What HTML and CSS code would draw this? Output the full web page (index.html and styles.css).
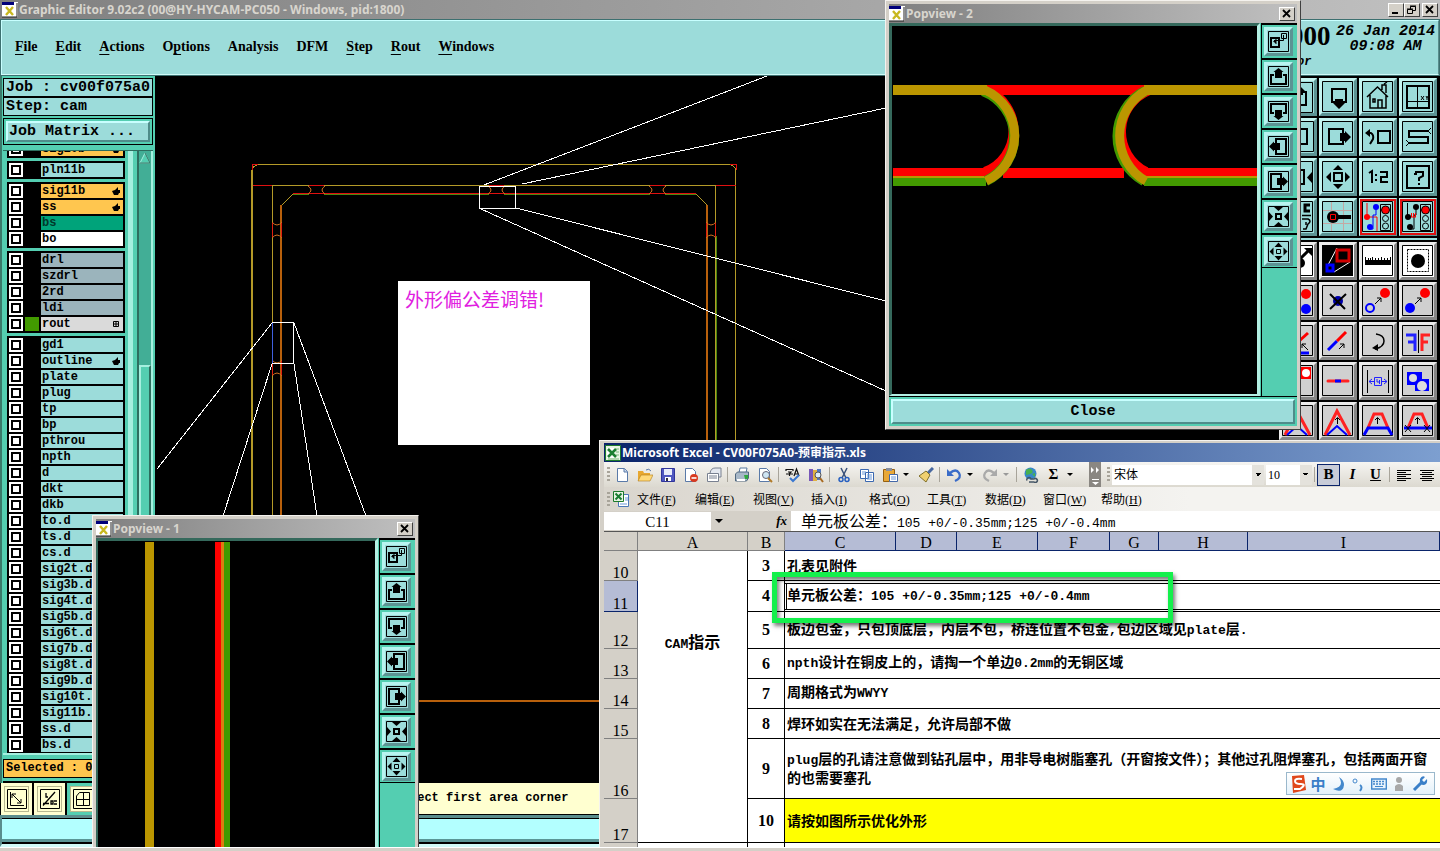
FILE: index.html
```html
<!DOCTYPE html>
<html lang="zh-CN">
<head>
<meta charset="utf-8">
<title>Graphic Editor</title>
<link rel="stylesheet" href="styles.css">
</head>
<body>
<svg class="defs" aria-hidden="true">
  <symbol id="app" viewBox="0 0 16 16"><path fill="#fff" d="M0 0h16v15H0z"/><path fill="#00007a" d="M0 0h12v3H0z"/><path d="M15 1v14H0" fill="none" stroke="#222"/><path d="M4 5l7 8M11 5l-7 8" stroke="#c8b820" stroke-width="2.4"/></symbol>
  <symbol id="x" viewBox="0 0 12 10"><path d="M2 1l7 7M9 1L2 8" stroke="#000" stroke-width="1.8"/></symbol>
  <symbol id="hand" viewBox="0 0 8 8"><path d="M0 4l3-1 3-3v3h2v3H7l-1 2H2z"/></symbol>
  <!-- view buttons, small -->
  <symbol id="v-link" viewBox="0 0 21 21"><path d="M.5.5h20v20H.5z" fill="none" stroke="#000"/><path d="M3 7h8v9H3z" fill="none" stroke="#000" stroke-width="2"/><path d="M13.500 2.500h5v5h-5zM15.500 4v5.500H6M8 8v5" fill="none" stroke="#000"/><path d="M5 10.500l3-2v4z"/></symbol>
  <symbol id="v-up" viewBox="0 0 21 21"><path d="M.5.5h20v20H.5z" fill="none" stroke="#000"/><path d="M6 9H3v9h15V9h-3" fill="none" stroke="#000" stroke-width="2"/><path d="M10.500 2l5 4H14v6H7V6H5.500z"/></symbol>
  <symbol id="v-left" viewBox="0 0 21 21"><path d="M.5.5h20v20H.5z" fill="none" stroke="#000"/><path d="M8 7V3h10v15H8v-4" fill="none" stroke="#000" stroke-width="2"/><path d="M1 10.500l5-5V7h6v7H6v1.500z"/></symbol>
  <symbol id="v-in" viewBox="0 0 21 21"><path d="M.5.5h20v20H.5z" fill="none" stroke="#000"/><path d="M8 8h5v5H8z" fill="none" stroke="#000" stroke-width="2"/><path d="M6 1h9l-4.500 4zM6 20h9l-4.500-4zM1 6v9l4-4.500zM20 6v9l-4-4.500z"/></symbol>
  <symbol id="v-out" viewBox="0 0 21 21"><path d="M.5.5h20v20H.5z" fill="none" stroke="#000"/><path d="M8.500 8.500h4v4h-4z" fill="none" stroke="#000"/><path d="M6.500 6L10.500 1.500 14.500 6zM6.500 15l4 4.500 4-4.500zM5.500 6.500v8L1.500 10.500zM15.500 6.500v8l4-4z"/></symbol>
  <!-- toolbox -->
  <symbol id="t-down" viewBox="0 0 32 32"><path d="M.5.5h30v30H.5z" fill="none" stroke="#000"/><path d="M13 21h-3V8h14v13h-3" fill="none" stroke="#000" stroke-width="2"/><path d="M13 18h8v4h2l-6 6-6-6h2z"/></symbol>
  <symbol id="t-right" viewBox="0 0 32 32"><path d="M.5.5h30v30H.5z" fill="none" stroke="#000"/><path d="M21 13V8H7v15h14v-4" fill="none" stroke="#000" stroke-width="2"/><path d="M18 12h5v-2l6 6-6 6v-2h-5z"/></symbol>
  <symbol id="t-house" viewBox="0 0 32 32"><path d="M.5.5h30v30H.5z" fill="none" stroke="#000"/><path d="M5 16L15.500 6 26 16M8 14v13h16V14M20 9V4h4v8M16 27v-8h4v8M11 18h2v3h-2zM22 3l3-2" fill="none" stroke="#000" stroke-width="1.500"/></symbol>
  <symbol id="t-xy" viewBox="0 0 32 32"><path d="M.5.5h30v30H.5z" fill="none" stroke="#000"/><path d="M5 5h22v22H5z" fill="none" stroke="#000" stroke-width="2"/><path d="M15.500 5v22M5 20.500h22M19 15l3 4M22 15l-3 4M24 15l1 2 1-2M25 17v2" fill="none" stroke="#000"/></symbol>
  <symbol id="t-back" viewBox="0 0 32 32"><path d="M.5.5h30v30H.5z" fill="none" stroke="#000"/><path d="M16 10h12v12H16zM5 12h4q3 2 2 6l-3 5" fill="none" stroke="#000" stroke-width="2"/><path d="M3 12l5-4v8z"/></symbol>
  <symbol id="t-s" viewBox="0 0 32 32"><path d="M.5.5h30v30H.5z" fill="none" stroke="#000"/><path d="M26 10H7v6h19v6H7" fill="none" stroke="#000" stroke-width="2"/><path d="M26 10l3-3M26 10l3 3M7 22l-3-3M7 22l-3 3" stroke="#000"/></symbol>
  <symbol id="t-in" viewBox="0 0 32 32"><path d="M.5.5h30v30H.5z" fill="none" stroke="#000"/><path d="M8 9h14v14H8z" fill="none" stroke="#000" stroke-width="2"/><path d="M30 11v11l-5-5.500z"/></symbol>
  <symbol id="t-out" viewBox="0 0 32 32"><path d="M.5.5h30v30H.5z" fill="none" stroke="#000"/><path d="M12 12h8v8h-8z" fill="none" stroke="#000" stroke-width="2"/><path d="M11 9l5-5 5 5zM11 23l5 5 5-5zM9 11v10l-5-5zM23 11v10l5-5z"/></symbol>
  <symbol id="t-12" viewBox="0 0 32 32"><path d="M.5.5h30v30H.5z" fill="none" stroke="#000"/><path d="M7 12l3-2v12M14 13v2M14 18v2M18 11h7v5h-6v5h7" fill="none" stroke="#000" stroke-width="2"/></symbol>
  <symbol id="t-q" viewBox="0 0 32 32"><path d="M.5.5h30v30H.5z" fill="none" stroke="#000"/><path d="M5 5h22v22H5zM12 13h2v-2h7v4l-4 2v3M17 22v2" fill="none" stroke="#000" stroke-width="2"/></symbol>
  <symbol id="t-c" viewBox="0 0 32 32"><path d="M.5.5h30v30H.5z" fill="none" stroke="#000"/><path d="M28 4h-5v6h5" fill="none" stroke="#000" stroke-width="3"/><path d="M20 14.500h9M20 18h6q4 2 0 5l-2 5h-3M24 21v3" fill="none" stroke="#000" stroke-width="1.500"/></symbol>
  <symbol id="t-pad" viewBox="0 0 32 32"><path d="M.5.5h30v30H.5z" fill="none" stroke="#000"/><path d="M9.500 1v29M21.500 1v29M1 9.500h29M1 22.500h29" stroke="#c4a8a4"/><circle cx="11" cy="16" r="6"/><path d="M15 16h14" stroke="#000" stroke-width="4"/><path d="M8.500 13.500h5v5h-5z" fill="none" stroke="#f00"/></symbol>
  <symbol id="t-net1" viewBox="0 0 32 32"><path d="M.5.5h30v30H.5z" fill="none" stroke="#000"/><path d="M5 2v14h10v14" fill="none" stroke="#f00"/><path d="M14 6v8h-3v14H7" fill="none" stroke="#00f"/><circle cx="14" cy="6" r="3" fill="#00f"/><circle cx="8" cy="26" r="3" fill="#00f"/><circle cx="5" cy="16" r="3" fill="#f00"/><path d="M18.500 3.500h10v26h-10z" fill="none" stroke="#000"/><circle cx="23.500" cy="9" r="4" fill="#f00" stroke="#000"/><circle cx="23.500" cy="17.500" r="3" fill="none" stroke="#000"/><circle cx="23.500" cy="25" r="3" fill="none" stroke="#000"/></symbol>
  <symbol id="t-net2" viewBox="0 0 32 32"><path d="M.5.5h30v30H.5z" fill="none" stroke="#000"/><path d="M5.500 2v14M14 6v8h-2v14H8" fill="none" stroke="#000"/><circle cx="14" cy="6" r="3"/><circle cx="8" cy="26" r="3"/><circle cx="6" cy="16" r="3"/><path d="M9 16h5M9.500 12v4M11.500 12v4M13.500 12v4" stroke="#f00"/><path d="M18.500 3.500h10v26h-10z" fill="none" stroke="#000"/><circle cx="23.500" cy="9" r="4" fill="#f00" stroke="#000"/><circle cx="23.500" cy="17.500" r="3" fill="none" stroke="#000"/><circle cx="23.500" cy="25" r="3" fill="none" stroke="#000"/></symbol>
  <symbol id="g-move" viewBox="0 0 32 32"><path d="M.5.5h30v30H.5z" fill="none" stroke="#000"/><path d="M18 14l9-9" stroke="#000" stroke-width="3"/><path d="M22 3h8v8z"/><circle cx="18" cy="18" r="5"/></symbol>
  <symbol id="g-zoom" viewBox="0 0 32 32"><path d="M0 0h31v31H0z"/><path d="M6 20L15 3M12 27l16-10" stroke="#fff"/><path d="M15 5h12v11H15z" fill="none" stroke="#d00000" stroke-width="3"/><path d="M5 20h6v6H5z" fill="none" stroke="#00f" stroke-width="3"/></symbol>
  <symbol id="g-rule" viewBox="0 0 32 32"><path d="M.5.5h30v30H.5z" fill="none" stroke="#000"/><path d="M3 12v8h26v-8h-1v3h-2v-2h-1v2h-2v-2h-1v2h-2v-3h-1v3h-2v-2h-1v2h-2v-2h-1v2h-2v-3h-1v3h-2v-2H9v2H7v-2H6v2H4v-3z"/></symbol>
  <symbol id="g-dot" viewBox="0 0 32 32"><path d="M.5.5h30v30H.5z" fill="none" stroke="#000"/><path d="M5.500 4.500h21v22h-21z" fill="none" stroke="#000" stroke-dasharray="2 1"/><circle cx="16" cy="16" r="7"/></symbol>
  <symbol id="g-two" viewBox="0 0 32 32"><path d="M.5.5h30v30H.5z" fill="none" stroke="#000"/><circle cx="24" cy="9" r="5" fill="#f00"/><circle cx="24" cy="24" r="5" fill="#00f"/></symbol>
  <symbol id="g-del" viewBox="0 0 32 32"><path d="M.5.5h30v30H.5z" fill="none" stroke="#000"/><circle cx="16" cy="16" r="5" fill="#00a"/><path d="M8 9l15 15M24 9L8 24" stroke="#000" stroke-width="2"/></symbol>
  <symbol id="g-cp" viewBox="0 0 32 32"><path d="M.5.5h30v30H.5z" fill="none" stroke="#000"/><circle cx="8" cy="23" r="4" fill="none" stroke="#00f" stroke-width="2"/><circle cx="23" cy="8" r="5" fill="#f00"/><path d="M13 19l6-6M15 13h4v4" fill="none" stroke="#000"/></symbol>
  <symbol id="g-mv" viewBox="0 0 32 32"><path d="M.5.5h30v30H.5z" fill="none" stroke="#000"/><circle cx="8" cy="23" r="5" fill="#00f"/><circle cx="23" cy="8" r="5" fill="#f00"/><path d="M13 19l6-6M15 13h4v4" fill="none" stroke="#000"/></symbol>
  <symbol id="g-ang" viewBox="0 0 32 32"><path d="M.5.5h30v30H.5z" fill="none" stroke="#000"/><path d="M16 17L26 8" stroke="#f00" stroke-width="3"/><path d="M10 28h17" stroke="#00f" stroke-width="3"/><path d="M20 19l6 6M20 23v-4h4" fill="none" stroke="#000"/></symbol>
  <symbol id="g-line" viewBox="0 0 32 32"><path d="M.5.5h30v30H.5z" fill="none" stroke="#000"/><path d="M6 25l9-9" stroke="#00f" stroke-width="3"/><path d="M15 16l9-9" stroke="#f00" stroke-width="3"/><path d="M17 24l5-5M18 19h4v4" fill="none" stroke="#000"/></symbol>
  <symbol id="g-rot" viewBox="0 0 32 32"><path d="M.5.5h30v30H.5z" fill="none" stroke="#000"/><path d="M14 9q8 1 8 7t-9 8" fill="none" stroke="#000" stroke-width="1.500"/><path d="M10 23l6-4v7z"/></symbol>
  <symbol id="g-mir" viewBox="0 0 32 32"><path d="M.5.5h30v30H.5z" fill="none" stroke="#000"/><path d="M4 10h9v16M6 17h7" fill="none" stroke="#22f" stroke-width="3"/><path d="M28 10h-8v16M26 17h-6" fill="none" stroke="#f22" stroke-width="3"/><path d="M16.500 5v23" stroke="#000"/></symbol>
  <symbol id="g-sq" viewBox="0 0 32 32"><path d="M.5.5h30v30H.5z" fill="none" stroke="#000"/><path d="M12 2h17v12H12z" fill="#f00"/><circle cx="24" cy="8" r="4" fill="#fff"/></symbol>
  <symbol id="g-seg" viewBox="0 0 32 32"><path d="M.5.5h30v30H.5z" fill="none" stroke="#000"/><path d="M6 16h20" stroke="#f22" stroke-width="3" stroke-linecap="round"/><path d="M13 16h6" stroke="#00f" stroke-width="3"/></symbol>
  <symbol id="g-dim" viewBox="0 0 32 32"><path d="M.5.5h30v30H.5z" fill="none" stroke="#000"/><path d="M5.500 5v23M26.500 5v23" stroke="#000"/><path d="M12.500 12.500h7v8h-7zM12 16.500H7M20 16.500h5M10 14l-3 2.500 3 2.500M22 14l3 2.500-3 2.500M15 14v3h3M17.500 15v4" fill="none" stroke="#22f"/></symbol>
  <symbol id="g-sub" viewBox="0 0 32 32"><path d="M.5.5h30v30H.5z" fill="none" stroke="#000"/><path d="M5 7h15v7h7v12H13v-6H5z" fill="#00f"/><circle cx="11" cy="13" r="4" fill="#ddd"/><circle cx="20" cy="21" r="5" fill="#ddd"/></symbol>
  <symbol id="g-a1" viewBox="0 0 32 32"><path d="M.5.5h30v30H.5z" fill="none" stroke="#000"/><path d="M3 30L15 6l13 24" fill="none" stroke="#f22" stroke-width="3"/><path d="M5 30l10-9 10 9" fill="none" stroke="#00f" stroke-width="2"/><path d="M15.500 19v-6M13 15l2.500-2.500L18 15" fill="none" stroke="#000"/></symbol>
  <symbol id="g-a2" viewBox="0 0 32 32"><path d="M.5.5h30v30H.5z" fill="none" stroke="#000"/><path d="M6 23l6-14h8l6 14" fill="none" stroke="#f22" stroke-width="3"/><path d="M2 30l4-7h20l4 7" fill="none" stroke="#00f" stroke-width="3"/><path d="M15.500 19v-6M13 15l2.500-2.500L18 15" fill="none" stroke="#000"/></symbol>
  <symbol id="g-a3" viewBox="0 0 32 32"><path d="M.5.5h30v30H.5z" fill="none" stroke="#000"/><path d="M6 23l6-14h8l6 14" fill="none" stroke="#f22" stroke-width="3"/><path d="M2 23h28" stroke="#00f" stroke-width="3"/><path d="M15.500 19v-6M13 15l2.500-2.500L18 15M3 20l6 7M9 20l-6 7M22 20l6 7M28 20l-6 7" fill="none" stroke="#000"/></symbol>
  <symbol id="b-diag" viewBox="0 0 20 20"><path d="M.5.5h19v19H.5z" fill="none" stroke="#000"/><path d="M3.500 3v13.500H17M5 5l9 9M5 9V5h4M14 10v4h-4" fill="none" stroke="#000"/></symbol>
  <symbol id="b-ang" viewBox="0 0 20 20"><path d="M.5.5h19v19H.5z" fill="none" stroke="#000"/><path d="M3 16.500L15 3M3 14.500h6M6 4v4h2M11 12h2v3h-2zM14 12h3M14 15h3" fill="none" stroke="#000" stroke-width="1.300"/></symbol>
  <symbol id="b-grid" viewBox="0 0 20 20"><path d="M.5.5h19v19H.5z" fill="none" stroke="#000"/><path d="M3.500 7l3-3.500h10v13h-13zM10.500 3.500v13M3.500 10.500h13" fill="none" stroke="#000"/></symbol>
  <!-- spreadsheet toolbar -->
  <symbol id="e-xl" viewBox="0 0 16 16"><path d="M.5.5h15v15H.5z" fill="#e8f5e4" stroke="#1d7a2b"/><path d="M11 4h3M11 7h3M11 10h3M3 14h11" stroke="#7ab87a"/><path d="M2 3h8v10H2z" fill="#fff"/><path d="M3 4l8 8M11 4l-8 8" stroke="#1b7e31" stroke-width="2.600"/></symbol>
  <symbol id="e-book" viewBox="0 0 16 16"><path d="M5.500 3.500h10v12h-10z" fill="#fff" stroke="#4a78b8"/><path d="M12 7h3M12 9h3M7 13h7" stroke="#6a98d8"/><path d="M.5.500h10v10H.5z" fill="#e8f5e4" stroke="#1d7a2b"/><path d="M2.500 2.500l6 6M8.500 2.500l-6 6" stroke="#1b7e31" stroke-width="2"/></symbol>
  <symbol id="e-new" viewBox="0 0 16 16"><path d="M3.500 1.500h7l3 3v10h-10z" fill="#fff" stroke="#5a7aa8"/><path d="M10 1.500v3.500h3.500" fill="#c8d8f0" stroke="#5a7aa8"/></symbol>
  <symbol id="e-open" viewBox="0 0 16 16"><path d="M1 14V4h5l1 2h6v8z" fill="#e8a830"/><path d="M1 14l3-6h12l-3 6z" fill="#ffd978" stroke="#b07b18" stroke-width=".6"/><path d="M9 3q3-2 5 1" fill="none" stroke="#5878a8"/></symbol>
  <symbol id="e-save" viewBox="0 0 16 16"><path d="M1.500 1.500h13v13h-13z" fill="#5058c0" stroke="#30359a"/><path d="M4 2h8v6H4z" fill="#e8ecfa"/><path d="M5 10h6v4H5z" fill="#fff"/><path d="M6 11h2v3H6z" fill="#334"/></symbol>
  <symbol id="e-perm" viewBox="0 0 16 16"><path d="M2.500 1.500h7l3 3v10h-10z" fill="#fff" stroke="#5a7aa8"/><circle cx="11" cy="11" r="4" fill="#d83a20"/><path d="M8.500 11h5" stroke="#fff" stroke-width="1.600"/></symbol>
  <symbol id="e-mail" viewBox="0 0 16 16"><path d="M4 6q1-5 5-5h6v9h-4z" fill="#e4e8f0" stroke="#788090"/><path d="M1.500 6.500h11v8h-11z" fill="#fff" stroke="#788090"/><path d="M3 9h8M3 11h8" fill="none" stroke="#788090"/></symbol>
  <symbol id="e-print" viewBox="0 0 16 16"><path d="M5 6l1-5h7l-1 5z" fill="#fff" stroke="#5878a0"/><path d="M1.500 7l2-2h11v6l-2 3h-11z" fill="#a8b8c8" stroke="#506880"/><path d="M3 12h8v2H3z" fill="#fff"/><path d="M10 8h4v4h-3z" fill="#30a840"/></symbol>
  <symbol id="e-prev" viewBox="0 0 16 16"><path d="M2.500 1.500h7l3 3v10h-10z" fill="#fff" stroke="#5a7aa8"/><circle cx="9" cy="8" r="3.500" fill="#cfe6f4" stroke="#667"/><path d="M11 11l4 4" stroke="#b07a28" stroke-width="2"/></symbol>
  <symbol id="e-spell" viewBox="0 0 16 16"><path d="M1 4V2.500h7V4M3 5h3L4.500 6.500V9M1 7h7M9 9l2.500-7L14 9M10 7h3" fill="none" stroke="#111" stroke-width="1.200"/><path d="M5 11l3 3 6-6" fill="none" stroke="#3a78d0" stroke-width="2"/></symbol>
  <symbol id="e-res" viewBox="0 0 16 16"><path d="M1 2h4v12H1z" fill="#7858b8"/><path d="M5 3h4v11H5z" fill="#e0b040"/><path d="M9 2h4v11H9z" fill="#5078c0"/><circle cx="10" cy="8" r="3" fill="#dcecf8" stroke="#555"/><path d="M12 11l3 4" stroke="#a86a20" stroke-width="2"/></symbol>
  <symbol id="e-cut" viewBox="0 0 16 16"><path d="M5 1l5 10M11 1L6 11" stroke="#38507a" stroke-width="1.500"/><circle cx="5" cy="12.500" r="2" fill="none" stroke="#2860c0" stroke-width="1.500"/><circle cx="11" cy="12.500" r="2" fill="none" stroke="#2860c0" stroke-width="1.500"/></symbol>
  <symbol id="e-copy" viewBox="0 0 16 16"><path d="M1.500 2.500h8v9h-8zM6.500 5.500h8v9h-8z" fill="#fff" stroke="#3a68b0"/><path d="M3 5h4M3 7h3M8 8h5M8 10h5M8 12h5" stroke="#6a98d8"/></symbol>
  <symbol id="e-paste" viewBox="0 0 16 16"><path d="M1.500 2.500h11v12h-11z" fill="#e8a838" stroke="#966010"/><path d="M4 1h6v3H4z" fill="#8890a0"/><path d="M7.500 7.500h8v7h-8z" fill="#fff" stroke="#4468a8"/><path d="M9 10h5M9 12h5" stroke="#6a98d8"/></symbol>
  <symbol id="e-brush" viewBox="0 0 16 16"><path d="M15 1l-5 5" stroke="#4868a0" stroke-width="3"/><path d="M8 4l4 4-4 7-7-6z" fill="#f0d070" stroke="#80702a"/></symbol>
  <symbol id="e-undo" viewBox="0 0 16 16"><path d="M4 6q6-5 9 0t-4 8" fill="none" stroke="currentColor" stroke-width="2.400"/><path d="M1 2v7h7z" fill="currentColor"/></symbol>
  <symbol id="e-redo" viewBox="0 0 16 16"><path d="M12 6q-6-5-9 0t4 8" fill="none" stroke="#aaa" stroke-width="2.400"/><path d="M15 2v7H8z" fill="#aaa"/></symbol>
  <symbol id="e-link" viewBox="0 0 16 16"><circle cx="7.500" cy="6.500" r="6" fill="#3888c8"/><path d="M3 3q4-3 6 0t-2 4-4 1zM9 7l3-1v4z" fill="#48b050"/><path d="M4 13.500a2 2 0 014-1.500h3a2 2 0 110 3H6" fill="none" stroke="#456" stroke-width="1.500"/></symbol>
  <symbol id="e-al" viewBox="0 0 16 16"><path d="M1 3.500h14M1 5.500h9M1 7.500h14M1 9.500h9M1 11.500h14M1 13.500h9" stroke="#000"/></symbol>
  <symbol id="e-ac" viewBox="0 0 16 16"><path d="M1 3.500h14M3 5.500h10M1 7.500h14M3 9.500h10M1 11.500h14M3 13.500h10" stroke="#000"/></symbol>
</svg>

<div class="desktop">
 <div class="screen">
  <main class="editor">
    <header class="titlebar">
      <svg class="app-icon"><use href="#app"/></svg>
      <h1 class="title-text">Graphic Editor 9.02c2 (00@HY-HYCAM-PC050 - Windows, pid:1800)</h1>
      <button class="winbtn" aria-label="Minimize"><svg viewBox="0 0 12 10"><path d="M2 8h6" stroke="#000" stroke-width="2"/></svg></button>
      <button class="winbtn" aria-label="Restore"><svg viewBox="0 0 12 10"><path d="M4.500 4V1.500h5v4H7M1.500 4.500h5v4h-5zM4 1h6M1 4h6" fill="none" stroke="#000"/></svg></button>
      <button class="winbtn winbtn-close" aria-label="Close"><svg><use href="#x"/></svg></button>
    </header>
    <div class="menupanel">
      <nav class="menu">
        <button><u>F</u>ile</button><button><u>E</u>dit</button><button><u>A</u>ctions</button><button>O<u>p</u>tions</button><button>Analysis</button><button>DFM</button><button><u>S</u>tep</button><button><u>R</u>out</button><button><u>W</u>indows</button>
      </nav>
      <div class="brand"><strong>000</strong><em>or</em></div>
      <div class="clock">26 Jan 2014<br>09:08 AM</div>
    </div>
    <div class="work">
      <aside class="side">
        <div class="job">Job : cv00f075a0</div>
        <div class="job">Step: cam</div>
        <div class="matrix"><button>Job Matrix ...</button></div>
        <div class="layers">
          <div class="list">
            <div class="group"><label class="layer sig"><input type="checkbox"><i></i><span>sig10b</span><svg><use href="#hand"/></svg></label></div>
            <div class="group"><label class="layer"><input type="checkbox"><i></i><span>pln11b</span></label></div>
            <div class="group">
              <label class="layer sig"><input type="checkbox"><i></i><span>sig11b</span><svg><use href="#hand"/></svg></label>
              <label class="layer sig"><input type="checkbox"><i></i><span>ss</span><svg><use href="#hand"/></svg></label>
              <label class="layer mask"><input type="checkbox"><i></i><span>bs</span></label>
              <label class="layer silk"><input type="checkbox"><i></i><span>bo</span></label>
            </div>
            <div class="group">
              <label class="layer drill"><input type="checkbox"><i></i><span>drl</span></label>
              <label class="layer drill"><input type="checkbox"><i></i><span>szdrl</span></label>
              <label class="layer drill"><input type="checkbox"><i></i><span>2rd</span></label>
              <label class="layer drill"><input type="checkbox"><i></i><span>ldi</span></label>
              <label class="layer route"><input type="checkbox"><i></i><span>rout</span><svg viewBox="0 0 8 8"><path d="M1.500 1.500h5v5h-5zM4 1v6M1 4h6" fill="none" stroke="#000"/></svg></label>
            </div>
            <div class="group">
              <label class="layer"><input type="checkbox"><i></i><span>gd1</span></label>
              <label class="layer"><input type="checkbox"><i></i><span>outline</span><svg><use href="#hand"/></svg></label>
              <label class="layer"><input type="checkbox"><i></i><span>plate</span></label>
              <label class="layer"><input type="checkbox"><i></i><span>plug</span></label>
              <label class="layer"><input type="checkbox"><i></i><span>tp</span></label>
              <label class="layer"><input type="checkbox"><i></i><span>bp</span></label>
              <label class="layer"><input type="checkbox"><i></i><span>pthrou</span></label>
              <label class="layer"><input type="checkbox"><i></i><span>npth</span></label>
              <label class="layer"><input type="checkbox"><i></i><span>d</span></label>
              <label class="layer"><input type="checkbox"><i></i><span>dkt</span></label>
              <label class="layer"><input type="checkbox"><i></i><span>dkb</span></label>
              <label class="layer"><input type="checkbox"><i></i><span>to.d</span></label>
              <label class="layer"><input type="checkbox"><i></i><span>ts.d</span></label>
              <label class="layer"><input type="checkbox"><i></i><span>cs.d</span></label>
              <label class="layer"><input type="checkbox"><i></i><span>sig2t.d</span></label>
              <label class="layer"><input type="checkbox"><i></i><span>sig3b.d</span></label>
              <label class="layer"><input type="checkbox"><i></i><span>sig4t.d</span></label>
              <label class="layer"><input type="checkbox"><i></i><span>sig5b.d</span></label>
              <label class="layer"><input type="checkbox"><i></i><span>sig6t.d</span></label>
              <label class="layer"><input type="checkbox"><i></i><span>sig7b.d</span></label>
              <label class="layer"><input type="checkbox"><i></i><span>sig8t.d</span></label>
              <label class="layer"><input type="checkbox"><i></i><span>sig9b.d</span></label>
              <label class="layer"><input type="checkbox"><i></i><span>sig10t.</span></label>
              <label class="layer"><input type="checkbox"><i></i><span>sig11b.</span></label>
              <label class="layer"><input type="checkbox"><i></i><span>ss.d</span></label>
              <label class="layer"><input type="checkbox"><i></i><span>bs.d</span></label>
            </div>
          </div>
          <div class="scroll"><svg class="up" viewBox="0 0 12 14"><path d="M1 12L6 2l5 10z" fill="#54ceb1" stroke="#a5efdf"/><path d="M6 2l5 10H1" fill="none" stroke="#2d6e5f"/></svg><div class="thumb"></div></div>
        </div>
        <div class="selected"><span>Selected : 0</span></div>
      </aside>
      <section class="canvas" aria-label="Board">
        <svg class="board" shape-rendering="crispEdges">
          <g transform="translate(-155 -76)" fill="none">
            <g stroke="#b49a28">
              <path stroke-width="2" d="M252 170V701"/>
              <path d="M252 171q1-6 7-6.500H730q5 1 5.500 6V480M272.500 520V185.500H715.500V480M293 194l-11 11M696 194l11 11"/>
            </g>
            <path stroke="#4a8a10" d="M293 194.500h16M324 194.500H489M504 194.500H650M665 194.500h31M716.500 236V480"/>
            <path stroke="#e01010" d="M252.500 170v-5.500h5M730 164.500h6v5M253 185.500h19M716 185.500h20M293 193.500H696M309 185.500h15M489 185.500h15M650 185.500h15"/>
            <path stroke="#b8600c" stroke-width="2" d="M281 205V520M707 205V480M252 701H610"/>
            <g stroke="#e02010">
              <path d="M272.500 222v16M281.500 222v16M706.500 222v16M715.500 222v16M272.500 360v16M281.500 360v16"/>
              <path stroke="#d07020" shape-rendering="auto" d="M308 186q6 4 0 8M325 186q-6 4 0 8M488 186q6 4 0 8M505 186q-6 4 0 8M649 186q6 4 0 8M666 186q-6 4 0 8M272 222q5 6 10 0M272 238q5-6 10 0M706 222q5 6 10 0M706 238q5-6 10 0M272 360q5 6 10 0M272 376q5-6 10 0"/>
            </g>
            <path stroke="#fff" d="M479.500 186.500h36v22h-36zM272.500 322.500h21v41h-21zM484 185L767 76M522 184L886 108M516 208L886 301M481 209L886 391M272 323L157 469M272 364L223 516M294 364L317 516M294 323L366 516"/>
            <path stroke="#4060e0" d="M272.500 323v40"/>
          </g>
        </svg>
      </section>
      <aside class="tools">
        <div class="toolgrid">
          <button aria-label="Pan up"><svg class="flip-y"><use href="#t-down"/></svg></button><button aria-label="Pan down"><svg><use href="#t-down"/></svg></button><button aria-label="Home"><svg><use href="#t-house"/></svg></button><button aria-label="Coordinates"><svg><use href="#t-xy"/></svg></button>
          <button aria-label="Pan left"><svg class="flip-x"><use href="#t-right"/></svg></button><button aria-label="Pan right"><svg><use href="#t-right"/></svg></button><button aria-label="Previous view"><svg><use href="#t-back"/></svg></button><button aria-label="Serpentine"><svg><use href="#t-s"/></svg></button>
          <button aria-label="Zoom in"><svg><use href="#t-in"/></svg></button><button aria-label="Zoom out"><svg><use href="#t-out"/></svg></button><button aria-label="Scale"><svg><use href="#t-12"/></svg></button><button aria-label="Help"><svg><use href="#t-q"/></svg></button>
          <button aria-label="Pick"><svg><use href="#t-c"/></svg></button><button aria-label="Snap"><svg><use href="#t-pad"/></svg></button><button class="hot" aria-label="Net check"><svg><use href="#t-net1"/></svg></button><button class="hot" aria-label="Net short"><svg><use href="#t-net2"/></svg></button>
        </div>
        <div class="toolgrid gray">
          <button class="lit" aria-label="Select"><svg><use href="#g-move"/></svg></button><button class="lit" aria-label="Popview"><svg><use href="#g-zoom"/></svg></button><button class="lit" aria-label="Measure"><svg><use href="#g-rule"/></svg></button><button class="lit" aria-label="Area"><svg><use href="#g-dot"/></svg></button>
          <button aria-label="Change"><svg><use href="#g-two"/></svg></button><button aria-label="Delete"><svg><use href="#g-del"/></svg></button><button aria-label="Copy"><svg><use href="#g-cp"/></svg></button><button aria-label="Move"><svg><use href="#g-mv"/></svg></button>
          <button aria-label="Angle"><svg><use href="#g-ang"/></svg></button><button aria-label="Extend"><svg><use href="#g-line"/></svg></button><button aria-label="Rotate"><svg><use href="#g-rot"/></svg></button><button aria-label="Mirror"><svg><use href="#g-mir"/></svg></button>
          <button aria-label="Surface"><svg><use href="#g-sq"/></svg></button><button aria-label="Break"><svg><use href="#g-seg"/></svg></button><button aria-label="Distance"><svg><use href="#g-dim"/></svg></button><button aria-label="Substitute"><svg><use href="#g-sub"/></svg></button>
          <button aria-label="Stretch"><svg><use href="#g-a1"/></svg></button><button aria-label="Stretch corner"><svg><use href="#g-a1"/></svg></button><button aria-label="Stretch parallel"><svg><use href="#g-a2"/></svg></button><button aria-label="Stretch fixed"><svg><use href="#g-a3"/></svg></button>
        </div>
      </aside>
    </div>
    <footer class="message">
      <button aria-label="Diagonal"><svg><use href="#b-diag"/></svg></button><button aria-label="Angle mode"><svg><use href="#b-ang"/></svg></button><button class="on" aria-label="Grid"><svg><use href="#b-grid"/></svg></button>
      <p>lect first area corner</p>
    </footer>
    <div class="bluebar"></div>
  </main>

  <div class="note">外形偏公差调错!</div>

  <section class="window pop-two">
    <header class="titlebar"><svg class="app-icon"><use href="#app"/></svg><h2 class="title-text">Popview - 2</h2><button class="winbtn" aria-label="Close"><svg><use href="#x"/></svg></button></header>
    <div class="popbody">
      <div class="view">
        <svg class="board">
          <g transform="translate(-892 -26)" fill="none" stroke-width="10">
            <path stroke="#f00" d="M984 90H1150M1003 173H1124"/>
            <path stroke="#f00" stroke-width="8" d="M893 172h93M1144 172h113"/>
            <path stroke="#429a00" stroke-width="8" d="M893 182h93M1144 182h113"/>
            <path stroke="#bb9600" stroke-width="2" d="M893 177h98M1140 177h117"/>
            <path stroke="#f00" d="M986 90A44 44 0 01985 172M1149 90A45 45 0 001146 172"/>
            <path stroke="#429a00" d="M983 91A49 49 0 01986 181M1145 91A51 51 0 001144 181"/>
            <path stroke="#bb9600" stroke-width="9" d="M985 90A50 50 0 01986 181M1147 90A52 52 0 001146 181"/>
            <path stroke="#bb9600" d="M893 90h94M1144 90h113"/>
          </g>
        </svg>
      </div>
      <div class="viewtools">
        <button aria-label="Attach"><svg><use href="#v-link"/></svg></button><button aria-label="Up"><svg><use href="#v-up"/></svg></button><button aria-label="Down"><svg class="flip-y"><use href="#v-up"/></svg></button><button aria-label="Left"><svg><use href="#v-left"/></svg></button><button aria-label="Right"><svg class="flip-x"><use href="#v-left"/></svg></button><button aria-label="Zoom in"><svg><use href="#v-in"/></svg></button><button aria-label="Zoom out"><svg><use href="#v-out"/></svg></button>
      </div>
    </div>
    <div class="closebar"><button>Close</button></div>
  </section>

  <section class="window pop-one">
    <header class="titlebar"><svg class="app-icon"><use href="#app"/></svg><h2 class="title-text">Popview - 1</h2><button class="winbtn" aria-label="Close"><svg><use href="#x"/></svg></button></header>
    <div class="popbody">
      <div class="view">
        <svg class="board" shape-rendering="crispEdges"><path fill="#bb9600" d="M47 1h9v340h-9z"/><path fill="#f00" d="M117 1h6v340h-6z"/><path fill="#dd7d10" d="M123 1h3v340h-3z"/><path fill="#429a00" d="M126 1h6v340h-6z"/></svg>
      </div>
      <div class="viewtools">
        <button aria-label="Attach"><svg><use href="#v-link"/></svg></button><button aria-label="Up"><svg><use href="#v-up"/></svg></button><button aria-label="Down"><svg class="flip-y"><use href="#v-up"/></svg></button><button aria-label="Left"><svg><use href="#v-left"/></svg></button><button aria-label="Right"><svg class="flip-x"><use href="#v-left"/></svg></button><button aria-label="Zoom in"><svg><use href="#v-in"/></svg></button><button aria-label="Zoom out"><svg><use href="#v-out"/></svg></button>
      </div>
    </div>
  </section>

  <section class="window excel">
    <header class="titlebar xl-title"><svg class="app-icon"><use href="#e-xl"/></svg><h2 class="title-text">Microsoft Excel - CV00F075A0-预审指示.xls</h2></header>
    <div class="xl-tools">
      <b class="grip"></b>
      <button aria-label="New"><svg><use href="#e-new"/></svg></button><button aria-label="Open"><svg><use href="#e-open"/></svg></button><button aria-label="Save"><svg><use href="#e-save"/></svg></button><button aria-label="Permission"><svg><use href="#e-perm"/></svg></button><button aria-label="Mail"><svg><use href="#e-mail"/></svg></button><b class="sep"></b>
      <button aria-label="Print"><svg><use href="#e-print"/></svg></button><button aria-label="Preview"><svg><use href="#e-prev"/></svg></button><b class="sep"></b>
      <button aria-label="Spelling"><svg><use href="#e-spell"/></svg></button><button aria-label="Research"><svg><use href="#e-res"/></svg></button><b class="sep"></b>
      <button aria-label="Cut"><svg><use href="#e-cut"/></svg></button><button aria-label="Copy"><svg><use href="#e-copy"/></svg></button><button aria-label="Paste"><svg><use href="#e-paste"/></svg></button><b class="caret"></b>
      <button aria-label="Format painter"><svg><use href="#e-brush"/></svg></button><b class="sep"></b>
      <button class="undo" aria-label="Undo"><svg><use href="#e-undo"/></svg></button><b class="caret"></b><button aria-label="Redo"><svg><use href="#e-redo"/></svg></button><b class="caret off"></b><b class="sep"></b>
      <button aria-label="Hyperlink"><svg><use href="#e-link"/></svg></button><button class="glyph" aria-label="Sum">Σ</button><b class="caret"></b>
      <button class="more" aria-label="Toolbar options"><svg viewBox="0 0 12 24"><path d="M2 4l3 3-3 3zM7 4l3 3-3 3zM3 16h7v1H3zM3 19h7l-3.500 3z" fill="#fff"/></svg></button>
      <b class="grip"></b>
      <select class="font" aria-label="Font"><option>宋体</option></select>
      <select class="size" aria-label="Size"><option>10</option></select><b class="sep"></b>
      <button class="glyph active" aria-label="Bold">B</button><button class="glyph" aria-label="Italic"><i>I</i></button><button class="glyph" aria-label="Underline"><u>U</u></button><b class="sep"></b>
      <button aria-label="Align left"><svg><use href="#e-al"/></svg></button><button aria-label="Center"><svg><use href="#e-ac"/></svg></button>
    </div>
    <nav class="xl-menu">
      <b class="grip"></b><svg class="app-icon"><use href="#e-book"/></svg>
      <button>文件(<u>F</u>)</button><button>编辑(<u>E</u>)</button><button>视图(<u>V</u>)</button><button>插入(<u>I</u>)</button><button>格式(<u>O</u>)</button><button>工具(<u>T</u>)</button><button>数据(<u>D</u>)</button><button>窗口(<u>W</u>)</button><button>帮助(<u>H</u>)</button>
    </nav>
    <div class="formula">
      <span class="cellname">C11</span><b class="caret"></b><i class="fx">fx</i>
      <span class="value">单元板公差：<span class="en">105 +0/-0.35mm;125 +0/-0.4mm</span></span>
    </div>
    <div class="sheet">
      <table>
        <colgroup><col class="c-n"><col class="c-a"><col class="c-b"><col class="c-c"><col class="c-d"><col class="c-e"><col class="c-f"><col class="c-g"><col class="c-h"><col></colgroup>
        <thead><tr><th></th><th>A</th><th>B</th><th class="cur">C</th><th class="cur">D</th><th class="cur">E</th><th class="cur">F</th><th class="cur">G</th><th class="cur">H</th><th class="cur">I</th></tr></thead>
        <tbody>
          <tr class="r30"><th>10</th><td class="cam" rowspan="8"><span class="en">CAM</span>指示</td><td class="num">3</td><td colspan="7">孔表见附件</td></tr>
          <tr class="r31"><th class="cur">11</th><td class="num">4</td><td colspan="7" class="picked">单元板公差：<span class="en">105 +0/-0.35mm;125 +0/-0.4mm</span></td></tr>
          <tr class="r37"><th>12</th><td class="num">5</td><td colspan="7">板边包金，只包顶底层，内层不包，桥连位置不包金<span class="en">,</span>包边区域见<span class="en">plate</span>层<span class="en">.</span></td></tr>
          <tr class="r30"><th>13</th><td class="num">6</td><td colspan="7"><span class="en">npth</span>设计在铜皮上的，请掏一个单边<span class="en">0.2mm</span>的无铜区域</td></tr>
          <tr class="r30"><th>14</th><td class="num">7</td><td colspan="7">周期格式为<span class="en">WWYY</span></td></tr>
          <tr class="r30"><th>15</th><td class="num">8</td><td colspan="7">焊环如实在无法满足，允许局部不做</td></tr>
          <tr class="r60"><th>16</th><td class="num">9</td><td colspan="7" class="wide"><span class="en">plug</span>层的孔请注意做到钻孔层中，用非导电树脂塞孔（开窗按文件）；其他过孔阻焊塞孔，包括两面开窗<br>的也需要塞孔</td></tr>
          <tr class="r44"><th>17</th><td class="num">10</td><td colspan="7" class="hl">请按如图所示优化外形</td></tr>
          <tr class="r30"><th></th><td></td><td></td><td colspan="7"></td></tr>
        </tbody>
      </table>
    </div>
  </section>

  <div class="marker"></div>

  <div class="ime">
    <svg viewBox="0 0 16 18"><path d="M2 1l12-1 2 15-13 3z" fill="#e0481c"/><path d="M12 4q-7-1-7 2t6 3-1 5H4" fill="none" stroke="#fff" stroke-width="2"/></svg>
    <span>中</span>
    <svg viewBox="0 0 16 18"><path d="M9 2q6 10-6 12 10 5 11-4 0-5-5-8z" fill="#4488cc"/></svg>
    <svg viewBox="0 0 16 18"><circle cx="5" cy="6" r="2" fill="none" stroke="#4488cc"/><path d="M10 10q3 2 0 6" fill="none" stroke="#4488cc" stroke-width="2"/></svg>
    <svg viewBox="0 0 16 18"><path d="M.7 4h14.600v10H.7z" fill="#e8f3fc" stroke="#4488cc" stroke-width="1.400"/><path d="M2 6.500h12M2 9h12" stroke="#4488cc" stroke-width="1.400" stroke-dasharray="2 1"/><path d="M4 11.500h8" stroke="#4488cc"/></svg>
    <svg viewBox="0 0 16 18"><circle cx="8" cy="5" r="3" fill="#a8a8a8"/><path d="M4 16V11q4-4 8 0v5z" fill="#a8a8a8"/></svg>
    <svg viewBox="0 0 16 18"><path d="M2 15L9 8" stroke="#3a7fc8" stroke-width="3"/><path d="M8 4q2-4 5-2l-3 3 2 2 3-3q1 5-3 6-5 0-4-6z" fill="#3a7fc8"/></svg>
  </div>
 </div>
 <div class="strip"></div>
</div>
</body>
</html>
```
FILE: styles.css
```css
* { box-sizing: border-box; }
body { margin: 0; background: #000; font-family: "Liberation Mono", monospace; color: #000; }
button { margin: 0; padding: 0; border: 0; background: none; color: inherit; font: inherit; display: block; }
svg { display: block; flex: none; }
.defs { position: absolute; width: 0; height: 0; }
.desktop { height: 100vh; display: flex; flex-direction: column; }
.screen { flex: 1; min-height: 0; position: relative; overflow: hidden; }
.strip { height: 4px; background: #d4d0c8; border-top: 1px solid #fff; }
.flip-y { transform: scaleY(-1); }
.flip-x { transform: scaleX(-1); }

/* window chrome */
.titlebar { display: flex; align-items: center; height: 19px; padding: 0 2px; background: linear-gradient(90deg, #808080, #c0c0c0); color: #d8d5ce; flex: none; }
.app-icon { width: 16px; height: 16px; margin-right: 1px; }
.title-text { margin: 0; flex: 1; font: bold 12px/18px "Noto Sans", "Noto Sans CJK SC", sans-serif; white-space: nowrap; }
.winbtn { width: 16px; height: 14px; background: #d4d0c8; border: 1px solid; border-color: #fff #404040 #404040 #fff; }
.winbtn svg { width: 12px; height: 10px; margin: 1px auto; }
.winbtn-close { margin-left: 2px; }
.window { position: absolute; display: flex; flex-direction: column; padding: 3px; background: #d4d0c8; border: 1px solid; border-color: #f4f2ee #404040 #404040 #f4f2ee; }
.window .titlebar { padding-left: 0; }

/* editor */
.editor { height: 100%; display: flex; flex-direction: column; background: #000; }
.menupanel { display: flex; height: 57px; flex: none; background: #9cdcda; border: 2px solid; border-color: #c8ffff #5a8d8d #d0fbf8 #c8ffff; outline: 1px solid #3d7070; outline-offset: -1px; padding: 0 3px 0 13px; }
.menu { display: flex; align-items: center; gap: 18px; flex: 1; font: bold 14px "Liberation Serif", serif; padding-bottom: 2px; }
.menu u { text-underline-offset: 3px; }
.brand { font-family: "Liberation Serif", serif; width: 46px; display: flex; flex-direction: column; align-items: flex-start; }
.brand strong { font-size: 27px; line-height: 31px; }
.brand em { font: italic bold 12px/20px "Liberation Mono", monospace; padding-left: 7px; }
.clock { font: italic bold 15px/15px "Liberation Mono", monospace; text-align: center; padding-top: 3px; }
.work { flex: 1; min-height: 0; display: flex; }
.side { width: 155px; flex: none; display: flex; flex-direction: column; background: #54ceb1; border-left: 2px solid #3b7a6b; padding: 2px 2px 0 1px; }
.job { height: 19px; flex: none; border: 1px solid #000; background: #9cdcda; font-size: 15px; line-height: 17px; font-weight: bold; padding-left: 2px; white-space: nowrap; overflow: hidden; }
.matrix { border: 1px solid #000; margin: 2px 0 5px; padding: 2px; flex: none; }
.matrix button { width: 100%; height: 21px; background: #9cdcda; border: 2px solid; border-color: #c8ffff #4f8c8a #4f8c8a #c8ffff; text-align: left; font-size: 15px; line-height: 17px; font-weight: bold; padding-left: 1px; }
.layers { flex: 1; min-height: 0; display: flex; overflow: hidden; border-top: 1px solid #2d6e5f; }
.list { width: 118px; flex: none; margin-top: -11px; margin-left: 4px; display: flex; flex-direction: column; gap: 3px; }
.group { background: #000; padding: 1px 2px; }
.layer { height: 16px; display: flex; align-items: center; font-size: 12px; font-weight: bold; position: relative; }
.layer input { appearance: none; margin: 0 2px 0 0; width: 14px; height: 14px; flex: none; background: #fff; border: 2px solid #fff; box-shadow: inset 0 0 0 2px #000; }
.layer i { width: 14px; height: 14px; flex: none; margin-right: 2px; }
.layer span { flex: 1; height: 14px; line-height: 14px; background: #9cdcda; padding-left: 1px; }
.layer svg { position: absolute; right: 3px; top: 4px; width: 8px; height: 8px; }
.sig span { background: #ffc64f; }
.mask span { background: #00a37a; color: #02382b; }
.silk span { background: #fff; }
.drill span { background: #9bb4bc; }
.route span { background: #dadada; }
.route i { background: #429a00; }
.scroll { flex: 1; display: flex; flex-direction: column; margin-left: 3px; background: #42ae96; border: solid; border-width: 0 2px 0 5px; border-color: #a5efdf; box-shadow: inset 4px 0 #54ceb1, inset 6px 0 #2d6e5f; padding-left: 6px; }
.up { width: 12px; height: 14px; }
.thumb { flex: 1; margin-top: 200px; background: #54ceb1; border: 2px solid; border-color: #a5efdf #2d6e5f #2d6e5f #a5efdf; }
.selected { height: 30px; flex: none; border-top: 2px solid #a5efdf; padding: 4px 0; border-bottom: 2px solid #000; }
.selected span { display: block; height: 19px; background: #ffc64f; border: 1px solid #000; font-size: 12px; font-weight: bold; line-height: 17px; padding-left: 2px; }
.canvas { flex: 1; min-width: 0; overflow: hidden; background: #000; }
.board { width: 100%; height: 100%; }
.tools { width: 162px; flex: none; padding: 2px 3px 0 1px; }
.toolgrid { display: grid; grid-template-columns: repeat(4, 38px); gap: 2px; }
.toolgrid button { height: 38px; background: #9cdcda; border: 3px solid; border-color: #c4f4f0 #5d9494 #5d9494 #c4f4f0; }
.toolgrid svg { width: 32px; height: 32px; }
.toolgrid .hot svg { outline: 2px solid #e01010; }
.gray { border-top: 2px solid #9cdcda; margin-top: 2px; padding-top: 2px; }
.gray button { background: #d0d0d0; border-color: #ececec #868686 #868686 #ececec; }
.gray .lit { background: #fff; }
.message { height: 32px; flex: none; display: flex; gap: 2px; background: #000; padding-left: 1px; }
.message button { width: 31px; background: #ffffd0; border: 4px solid #ffffd0; outline: 1px solid #b8b890; outline-offset: -4px; padding: 2px; }
.message .on { border-color: #54ceb1; }
.message svg { width: 20px; height: 20px; }
.message p { margin: 0; flex: 1; background: #ffffd0; font-size: 12px; font-weight: bold; line-height: 30px; padding-left: 310px; border-bottom: 1px solid #000; }
.bluebar { height: 32px; flex: none; background: #b3ffff; border: solid; border-width: 3px 2px; border-color: #5a8d8d #5a8d8d #d0fbf8; box-shadow: inset 0 1px #000, inset 0 -2px #000, inset 0 -5px #5a9696; }

.note { position: absolute; left: 398px; top: 281px; width: 192px; height: 164px; background: #fff; color: #e020e0; font: 19px/36px "Noto Sans CJK SC", sans-serif; padding-left: 7px; }

/* popview windows */
.pop-two { left: 885px; top: 0; width: 416px; height: 430px; }
.pop-one { left: 92px; top: 515px; width: 327px; bottom: 0; border-bottom: 0; padding-bottom: 0; }
.popbody { flex: 1; min-height: 0; display: flex; background: #54ceb1; }
.view { flex: 1; min-width: 0; background: #000; border: solid; border-width: 3px; border-color: #35695c #b4f0e4 #35695c #35695c; overflow: hidden; }
.pop-one .view { border-bottom: 0; border-left-width: 2px; }
.pop-two .view { border-bottom: 2px solid #b4f0e4; }
.viewtools { width: 36px; flex: none; margin-left: 1px; border-left: 1px solid #000; display: flex; flex-direction: column; }
.viewtools button { height: 35px; flex: none; border-top: 2px solid #000; padding: 2px; }
.viewtools button:last-child { border-bottom: 1px solid #000; }
.viewtools svg { width: 29px; height: 29px; padding: 1px; background: #9cdcda; border: 3px solid; border-color: #b8f4f0 #5d9494 #5d9494 #b8f4f0; }
.viewtools .flip-y { border-color: #5d9494 #5d9494 #b8f4f0 #b8f4f0; }
.viewtools .flip-x { border-color: #b8f4f0 #b8f4f0 #5d9494 #5d9494; }
.closebar { background: #54ceb1; border-top: 1px solid #000; padding: 2px; }
.closebar button { width: 100%; height: 25px; background: #9cdcda; border: 2px solid; border-color: #c8ffff #4f8c8a #4f8c8a #c8ffff; font: bold 15px/20px "Liberation Mono", monospace; }

/* spreadsheet */
.excel { left: 599px; top: 440px; right: 0; bottom: 0; padding: 2px 0 0 4px; border-width: 1px 0 0 1px; font-family: "Liberation Serif", "Noto Sans CJK SC", serif; }
.xl-title { background: linear-gradient(90deg, #0a246a, #7d9fd0); color: #fff; }
.excel .xl-title { padding-left: 1px; }
.xl-tools { height: 25px; flex: none; display: flex; align-items: center; background: linear-gradient(#f6f5f2, #dcd9d0); padding-left: 3px; overflow: hidden; }
.xl-tools button { width: 23px; height: 22px; flex: none; }
.xl-tools svg { width: 16px; height: 16px; margin: auto; }
.grip { width: 3px; height: 15px; flex: none; background: repeating-linear-gradient(#a8a49a 0 2px, transparent 2px 4px); }
.sep { width: 1px; height: 15px; flex: none; margin: 0 2px; background: #a8a49a; }
.caret { width: 0; height: 0; flex: none; border: solid transparent; border-width: 3px 3px 0; border-top-color: #000; margin: 0 5px 0 2px; }
.off { border-top-color: #999; }
.undo { color: #3a6cc8; }
.xl-tools .glyph { font: bold 15px "Liberation Serif", serif; }
.xl-tools .active { background: #c8ccd8; border: 1px solid #0a246a; margin-right: 1px; }
.xl-tools .more { width: 12px; height: 25px; background: #8a8782; margin: 0 6px 0 11px; }
.xl-tools .more svg { width: 12px; height: 24px; }
.xl-tools select { height: 20px; border: 0; border-radius: 0; margin: 0 0 0 2px; padding: 0 0 0 2px; flex: none; font: 12px "Liberation Serif", "Noto Sans CJK SC", serif; appearance: none; background: linear-gradient(to bottom left, #000 50%, transparent 50%) right 6px center / 3px 3px no-repeat, linear-gradient(to bottom right, #000 50%, transparent 50%) right 3px center / 3px 3px no-repeat, linear-gradient(90deg, #fff calc(100% - 12px), #e4e2dc 0); }
.xl-tools .font { width: 152px; }
.xl-tools .size { width: 46px; }
.xl-menu { height: 24px; flex: none; display: flex; align-items: center; background: linear-gradient(90deg, #d9d5cd, #f4f3f0 70%); padding-left: 3px; font-size: 12px; }
.xl-menu .app-icon { margin: 0 7px 0 3px; }
.xl-menu button { width: 58px; text-align: left; flex: none; white-space: nowrap; padding-left: 1px; }
.formula { height: 20px; flex: none; display: flex; align-items: center; background: #d4d0c8; }
.cellname { width: 107px; height: 18px; background: #fff; text-align: center; font-size: 15px; line-height: 20px; }
.formula .caret { margin: 0 0 0 4px; border-width: 4px 4px 0; }
.fx { font: italic bold 13px "Liberation Serif", serif; width: 64px; text-align: right; }
.value { flex: 1; margin-left: 4px; padding-left: 10px; background: #fff; font-family: "Noto Sans CJK SC", sans-serif; font-size: 16px; line-height: 18px; height: 20px; white-space: nowrap; }
.en { font-family: "Liberation Mono", monospace; font-size: 13px; }
.sheet { flex: 1; min-height: 0; overflow: hidden; background: #fff; border-top: 1px solid #555; }
table { width: 100%; table-layout: fixed; border-collapse: separate; border-spacing: 0; }
.c-n { width: 34px; } .c-a { width: 110px; } .c-b { width: 37px; } .c-c { width: 111px; } .c-d { width: 61px; } .c-e { width: 81px; } .c-f { width: 72px; } .c-g { width: 49px; } .c-h { width: 89px; }
th { padding: 0; font: 16px/15px "Liberation Serif", serif; background: #d4d0c8; border: solid #808080; border-width: 0 1px 1px 0; }
thead th { height: 19px; padding-top: 3px; }
tbody th { vertical-align: bottom; }
th.cur { background: #b5bcd5; border-color: #0a246a; }
td { padding: 0 0 2px 2px; font: bold 14px/16px "Noto Sans CJK SC", sans-serif; border: solid #000; border-width: 0 1px 1px 0; white-space: nowrap; overflow: hidden; }
td:last-child { border-right: 0; }
.num { padding: 0; text-align: center; font: bold 16px/16px "Liberation Serif", serif; }
.cam { vertical-align: top; text-align: center; padding: 82px 0 0; font-size: 16px; }
.picked { border-bottom: 3px double #000; box-shadow: inset 0 2px #fff, inset 0 3px #000, inset 1px 0 #fff, inset 2px 0 #000; padding-bottom: 0; }
.hl { background: #ff0; }
.r30 { height: 30px; } .r31 { height: 31px; } .r37 { height: 37px; } .r44 { height: 44px; } .r60 { height: 60px; }

.marker { position: absolute; left: 772px; top: 572px; width: 401px; height: 51px; border: 5px solid #14f04c; box-shadow: 2px 3px 4px #0008, inset 2px 3px 4px #0008; }
.ime { position: absolute; right: 5px; top: 772px; width: 149px; height: 23px; display: flex; align-items: center; justify-content: space-between; padding: 0 6px 0 3px; background: linear-gradient(#fff, #e4f1fa); border: 1px solid #9ab8cc; color: #3a7fc8; font: bold 15px/20px "Noto Sans CJK SC", sans-serif; }
.ime svg { width: 16px; height: 18px; }
```
